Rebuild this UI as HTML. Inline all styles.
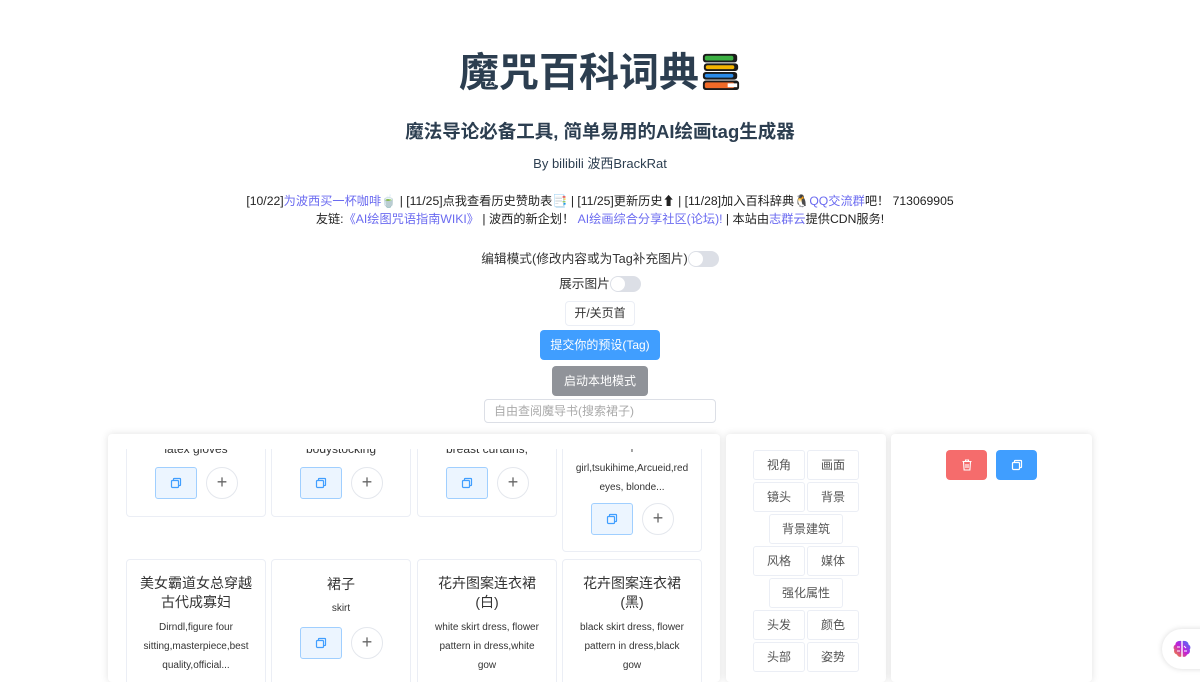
<!DOCTYPE html>
<html><head><meta charset="utf-8"><style>
*{box-sizing:border-box;margin:0;padding:0}
body{width:1200px;height:672px;overflow:hidden;background:#fff;font-family:"Liberation Sans","Noto Sans CJK SC",sans-serif;color:#2c3e50;position:relative}
.c{position:absolute;left:0;width:1200px;text-align:center}
a{color:#6b6bf0;text-decoration:none}
.panel{position:absolute;top:434px;bottom:-10px;background:#fff;border-radius:4px;box-shadow:0 0 8px rgba(0,0,0,.12)}
.clip{position:absolute;left:0;right:0;top:15px;bottom:0;overflow:hidden}
.card{position:absolute;width:140px;border:1px solid #ebeef5;border-radius:4px;background:#fff;text-align:center;color:#333}
.cp{position:absolute;width:42px;height:32px;border:1px solid #a0cfff;background:#ecf5ff;border-radius:3px}
.pl{position:absolute;width:32px;height:32px;border:1px solid #e4e7ed;border-radius:50%;color:#666;font-size:18px;line-height:29px;text-align:center}
.cp svg,.bb svg{position:absolute;left:50%;top:50%;transform:translate(-50%,-50%)}
.tag{position:absolute;height:30px;border:1px solid #ebeef5;border-radius:3px;font-size:12px;color:#555;text-align:center;line-height:28px}
.btn{position:absolute;border-radius:4px;font-size:12px;text-align:center}
.tg{display:inline-block;width:31px;height:16px;border-radius:8px;background:#dcdfe6;position:relative;vertical-align:middle;margin-top:-2px}
.tg:after{content:"";position:absolute;left:1px;top:1px;width:14px;height:14px;border-radius:50%;background:#fff}
.t1{font-size:14px;line-height:20px}.t2{font-size:12px;line-height:19px;color:#333}
</style></head><body>
<div class="c" style="top:47px;font-size:40px;font-weight:bold;line-height:52px">魔咒百科词典<svg width="40" height="40" viewBox="0 0 42 42" style="vertical-align:-5px;margin-left:2px"><rect x="2" y="3" width="36" height="9" rx="3" fill="#1b1b1b"/><rect x="4" y="5" width="30" height="5" rx="2" fill="#3cb043"/><rect x="3" y="13" width="36" height="8" rx="3" fill="#1b1b1b"/><rect x="5" y="15" width="30" height="4" rx="2" fill="#f5b400"/><rect x="2" y="22" width="36" height="8" rx="3" fill="#1b1b1b"/><rect x="4" y="24" width="30" height="4" rx="2" fill="#2b8be8"/><rect x="2" y="31" width="38" height="10" rx="3" fill="#1b1b1b"/><rect x="4" y="33" width="31" height="6" rx="2" fill="#f06a28"/><rect x="28" y="34" width="10" height="4" fill="#fff"/></svg></div>
<div class="c" style="top:120px;font-size:18.5px;font-weight:bold;line-height:24px">魔法导论必备工具, 简单易用的AI绘画tag生成器</div>
<div class="c" style="top:155px;font-size:13px;line-height:18px">By bilibili 波西BrackRat</div>
<div class="c" style="top:192px;font-size:12.2px;line-height:18px;color:#222">[10/22]<a>为波西买一杯咖啡</a>🍵 | [11/25]点我查看历史赞助表📑 | [11/25]更新历史⬆ | [11/28]加入百科辞典🐧<a>QQ交流群</a>吧！ 713069905<br>友链:<a>《AI绘图咒语指南WIKI》</a> | 波西的新企划！ <a>AI绘画综合分享社区(论坛)!</a> | 本站由<a>志群云</a>提供CDN服务!</div>
<div class="c" style="top:250px;font-size:12.7px;line-height:18px;color:#333">编辑模式(修改内容或为Tag补充图片)<span class="tg"></span></div>
<div class="c" style="top:275px;font-size:12.7px;line-height:18px;color:#333">展示图片<span class="tg"></span></div>
<div class="btn" style="left:565px;top:301px;width:70px;height:25px;border:1px solid #ebeef5;line-height:23px;color:#333">开/关页首</div>
<div class="btn" style="left:540px;top:330px;width:120px;height:30px;background:#409eff;color:#fff;line-height:30px">提交你的预设(Tag)</div>
<div class="btn" style="left:552px;top:366px;width:96px;height:30px;background:#909399;color:#fff;line-height:30px">启动本地模式</div>
<div class="btn" style="left:484px;top:399px;width:232px;height:24px;border:1px solid #dcdfe6;text-align:left;padding-left:9px;line-height:22px;color:#aaa">自由查阅魔导书(搜索裙子)</div>

<div class="panel" style="left:108px;width:612px"><div class="clip">
<div class="card" style="left:18px;top:-40px;height:108px"><div class="t2" style="margin-top:30px">latex gloves</div><div class="cp" style="left:28px;top:57px"><svg width="12" height="12" viewBox="0 0 12 12" fill="none" stroke="#409eff" stroke-width="1.2"><rect x="1.5" y="3.5" width="7" height="7" rx="1"/><path d="M3.5 3.5V2a.5.5 0 0 1 .5-.5h6a.5.5 0 0 1 .5.5v6a.5.5 0 0 1-.5.5H8.5"/></svg></div><div class="pl" style="left:79px;top:57px">+</div></div>
<div class="card" style="left:163px;top:-40px;height:108px"><div class="t2" style="margin-top:30px">bodystocking</div><div class="cp" style="left:28px;top:57px"><svg width="12" height="12" viewBox="0 0 12 12" fill="none" stroke="#409eff" stroke-width="1.2"><rect x="1.5" y="3.5" width="7" height="7" rx="1"/><path d="M3.5 3.5V2a.5.5 0 0 1 .5-.5h6a.5.5 0 0 1 .5.5v6a.5.5 0 0 1-.5.5H8.5"/></svg></div><div class="pl" style="left:79px;top:57px">+</div></div>
<div class="card" style="left:309px;top:-40px;height:108px"><div class="t2" style="margin-top:30px">breast curtains,</div><div class="cp" style="left:28px;top:57px"><svg width="12" height="12" viewBox="0 0 12 12" fill="none" stroke="#409eff" stroke-width="1.2"><rect x="1.5" y="3.5" width="7" height="7" rx="1"/><path d="M3.5 3.5V2a.5.5 0 0 1 .5-.5h6a.5.5 0 0 1 .5.5v6a.5.5 0 0 1-.5.5H8.5"/></svg></div><div class="pl" style="left:79px;top:57px">+</div></div>
<div class="card" style="left:454px;top:-40px;height:143px;overflow:hidden"><div class="t2" style="margin-top:30px;font-size:10px;line-height:19px;white-space:nowrap;overflow:hidden;padding:0 8px">i<br>girl,tsukihime,Arcueid,red<br>eyes, blonde...</div><div class="cp" style="left:28px;top:93px"><svg width="12" height="12" viewBox="0 0 12 12" fill="none" stroke="#409eff" stroke-width="1.2"><rect x="1.5" y="3.5" width="7" height="7" rx="1"/><path d="M3.5 3.5V2a.5.5 0 0 1 .5-.5h6a.5.5 0 0 1 .5.5v6a.5.5 0 0 1-.5.5H8.5"/></svg></div><div class="pl" style="left:79px;top:93px">+</div></div>
<div class="card" style="left:18px;top:110px;height:140px"><div class="t1" style="margin-top:14px;line-height:19px">美女霸道女总穿越<br>古代成寡妇</div><div class="t2" style="margin-top:6px;font-size:10px;line-height:19px">Dirndl,figure four<br>sitting,masterpiece,best<br>quality,official...</div></div>
<div class="card" style="left:163px;top:110px;height:140px"><div class="t1" style="margin-top:14px">裙子</div><div class="t2" style="margin-top:5px;font-size:10px">skirt</div><div class="cp" style="left:28px;top:67px"><svg width="12" height="12" viewBox="0 0 12 12" fill="none" stroke="#409eff" stroke-width="1.2"><rect x="1.5" y="3.5" width="7" height="7" rx="1"/><path d="M3.5 3.5V2a.5.5 0 0 1 .5-.5h6a.5.5 0 0 1 .5.5v6a.5.5 0 0 1-.5.5H8.5"/></svg></div><div class="pl" style="left:79px;top:67px">+</div></div>
<div class="card" style="left:309px;top:110px;height:140px"><div class="t1" style="margin-top:14px;line-height:19px">花卉图案连衣裙<br>(白)</div><div class="t2" style="margin-top:6px;font-size:10px;line-height:19px">white skirt dress, flower<br>pattern in dress,white<br>gow</div></div>
<div class="card" style="left:454px;top:110px;height:140px"><div class="t1" style="margin-top:14px;line-height:19px">花卉图案连衣裙<br>(黑)</div><div class="t2" style="margin-top:6px;font-size:10px;line-height:19px">black skirt dress, flower<br>pattern in dress,black<br>gow</div></div>
</div></div>

<div class="panel" style="left:726px;width:160px">
<div class="tag" style="left:27px;top:16px;width:52px">视角</div><div class="tag" style="left:81px;top:16px;width:52px">画面</div>
<div class="tag" style="left:27px;top:48px;width:52px">镜头</div><div class="tag" style="left:81px;top:48px;width:52px">背景</div>
<div class="tag" style="left:43px;top:80px;width:74px">背景建筑</div>
<div class="tag" style="left:27px;top:112px;width:52px">风格</div><div class="tag" style="left:81px;top:112px;width:52px">媒体</div>
<div class="tag" style="left:43px;top:144px;width:74px">强化属性</div>
<div class="tag" style="left:27px;top:176px;width:52px">头发</div><div class="tag" style="left:81px;top:176px;width:52px">颜色</div>
<div class="tag" style="left:27px;top:208px;width:52px">头部</div><div class="tag" style="left:81px;top:208px;width:52px">姿势</div>
</div>
<div class="panel" style="left:891px;width:201px">
<div class="btn bb" style="left:55px;top:16px;width:41px;height:30px;background:#f56c6c"><svg width="11" height="12" viewBox="0 0 11 12" fill="none" stroke="#fff" stroke-width="1.1"><path d="M1 2.5h9M4 2.5V1h3v1.5M2 2.5l.6 8.5h5.8L9 2.5M4.5 5v4M6.5 5v4"/></svg></div>
<div class="btn bb" style="left:105px;top:16px;width:41px;height:30px;background:#409eff"><svg width="12" height="12" viewBox="0 0 12 12" fill="none" stroke="#fff" stroke-width="1.2"><rect x="1.5" y="3.5" width="7" height="7" rx="1"/><path d="M3.5 3.5V2a.5.5 0 0 1 .5-.5h6a.5.5 0 0 1 .5.5v6a.5.5 0 0 1-.5.5H8.5"/></svg></div>
</div>
<div style="position:absolute;left:1162px;top:629px;width:60px;height:40px;border-radius:20px;background:#fff;box-shadow:0 0 6px rgba(0,0,0,.15)"><svg style="position:absolute;left:10px;top:10px" width="20" height="20" viewBox="0 0 20 20"><defs><linearGradient id="g" x1="0" y1="1" x2="1" y2="0"><stop offset="0" stop-color="#f7931e"/><stop offset=".5" stop-color="#c21fd8"/><stop offset="1" stop-color="#3d7bff"/></linearGradient></defs><path d="M9.3 2C6 1.5 3.5 3 3.5 5.5 1.5 6.5 1 9 2.3 10.5 1.5 12.5 2.5 15 5 15.5 5.5 17.5 8 18.5 9.3 17.5ZM10.7 2C14 1.5 16.5 3 16.5 5.5 18.5 6.5 19 9 17.7 10.5 18.5 12.5 17.5 15 15 15.5 14.5 17.5 12 18.5 10.7 17.5Z" fill="url(#g)"/><path d="M5 8h3M12 7l2 2M5 12h3M12 12h3" stroke="#fff" stroke-width="1"/></svg></div>
</body></html>
